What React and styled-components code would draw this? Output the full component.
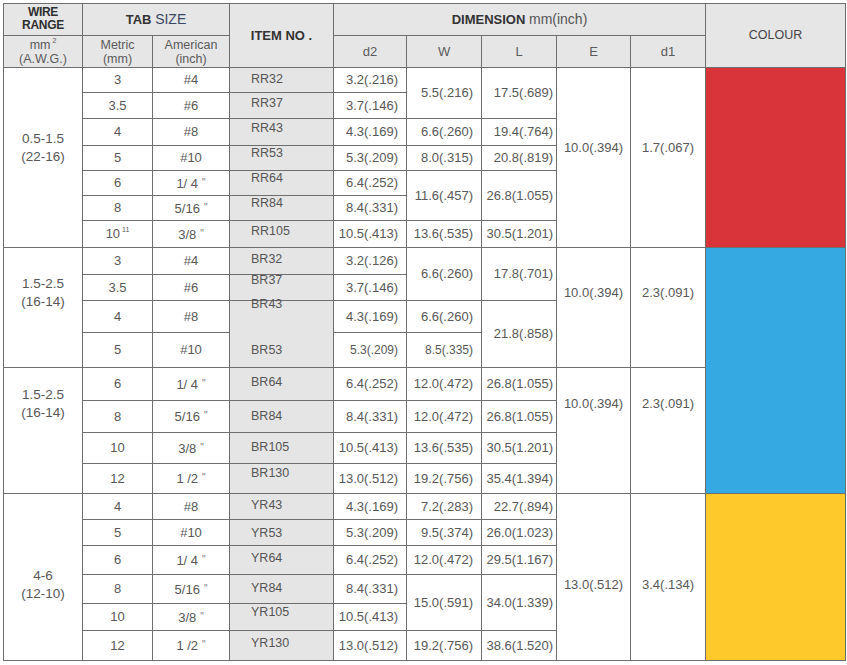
import React from 'react'
import styled, { createGlobalStyle } from 'styled-components'

const GlobalStyle = createGlobalStyle`
  html, body {
    margin: 0;
    padding: 0;
    background: #ffffff;
  }
  body {
    font-family: 'Liberation Sans', Arial, sans-serif;
  }
`

const columns = [79, 70, 77, 104, 73, 75, 75, 74, 75, 140]

// w / l: [text, rowSpan]; missing means covered by the span above
const groups = [
  {
    wire: ['0.5-1.5', '(22-16)'],
    shift: -10,
    e: '10.0(.394)',
    d1: '1.7(.067)',
    colour: '#d93439',
    colourSpan: 7,
    rows: [
      { h: 25, m: '3', a: '#4', item: 'RR32', dy: 4, d2: '3.2(.216)', w: ['5.5(.216)', 2], l: ['17.5(.689)', 2] },
      { h: 26, m: '3.5', a: '#6', item: 'RR37', dy: 3, d2: '3.7(.146)' },
      { h: 27, m: '4', a: '#8', item: 'RR43', dy: 2, d2: '4.3(.169)', w: ['6.6(.260)'], l: ['19.4(.764)'] },
      { h: 25, m: '5', a: '#10', item: 'RR53', dy: 0, d2: '5.3(.209)', w: ['8.0(.315)'], l: ['20.8(.819)'] },
      { h: 25, m: '6', a: '1/ 4', inch: true, item: 'RR64', dy: 0, d2: '6.4(.252)', w: ['11.6(.457)', 2], l: ['26.8(1.055)', 2] },
      { h: 25, m: '8', a: '5/16', inch: true, item: 'RR84', dy: 0, d2: '8.4(.331)' },
      { h: 27, m: '10', sup: '11', a: '3/8', inch: true, item: 'RR105', dy: 3, d2: '10.5(.413)', w: ['13.6(.535)'], l: ['30.5(1.201)'] },
    ],
  },
  {
    wire: ['1.5-2.5', '(16-14)'],
    shift: -15,
    e: '10.0(.394)',
    d1: '2.3(.091)',
    colour: '#35a9e1',
    colourSpan: 8,
    rows: [
      { h: 27, m: '3', a: '#4', item: 'BR32', dy: 4, d2: '3.2(.126)', w: ['6.6(.260)', 2], l: ['17.8(.701)', 2] },
      { h: 26, m: '3.5', a: '#6', item: 'BR37', dy: -2, d2: '3.7(.146)' },
      { h: 32, m: '4', a: '#8', item: 'BR43', dy: -4, d2: '4.3(.169)', w: ['6.6(.260)'], l: ['21.8(.858)', 2] },
      { h: 35, m: '5', a: '#10', item: 'BR53', dy: 10, open: true, small: true, d2: '5.3(.209)', w: ['8.5(.335)'] },
    ],
  },
  {
    wire: ['1.5-2.5', '(16-14)'],
    shift: -27,
    e: '10.0(.394)',
    d1: '2.3(.091)',
    rows: [
      { h: 33, m: '6', a: '1/ 4', inch: true, item: 'BR64', dy: 7, d2: '6.4(.252)', w: ['12.0(.472)'], l: ['26.8(1.055)'] },
      { h: 32, m: '8', a: '5/16', inch: true, item: 'BR84', dy: 8, d2: '8.4(.331)', w: ['12.0(.472)'], l: ['26.8(1.055)'] },
      { h: 31, m: '10', a: '3/8', inch: true, item: 'BR105', dy: 7, d2: '10.5(.413)', w: ['13.6(.535)'], l: ['30.5(1.201)'] },
      { h: 30, m: '12', a: '1 /2', inch: true, item: 'BR130', dy: 2, d2: '13.0(.512)', w: ['19.2(.756)'], l: ['35.4(1.394)'] },
    ],
  },
  {
    wire: ['4-6', '(12-10)'],
    shift: 8,
    e: '13.0(.512)',
    d1: '3.4(.134)',
    colour: '#fec92b',
    colourSpan: 6,
    rows: [
      { h: 26, m: '4', a: '#8', item: 'YR43', dy: 4, d2: '4.3(.169)', w: ['7.2(.283)'], l: ['22.7(.894)'] },
      { h: 26, m: '5', a: '#10', item: 'YR53', dy: 6, d2: '5.3(.209)', w: ['9.5(.374)'], l: ['26.0(1.023)'] },
      { h: 29, m: '6', a: '1/ 4', inch: true, item: 'YR64', dy: 5, d2: '6.4(.252)', w: ['12.0(.472)'], l: ['29.5(1.167)'] },
      { h: 29, m: '8', a: '5/16', inch: true, item: 'YR84', dy: 6, d2: '8.4(.331)', w: ['15.0(.591)', 2], l: ['34.0(1.339)', 2] },
      { h: 27, m: '10', a: '3/8', inch: true, item: 'YR105', dy: 1, d2: '10.5(.413)' },
      { h: 30, m: '12', a: '1 /2', inch: true, item: 'YR130', dy: 5, d2: '13.0(.512)', w: ['19.2(.756)'], l: ['38.6(1.520)'] },
    ],
  },
]

const App = () => {
  return (
    <Page>
      <GlobalStyle />
      <Sheet>
        <colgroup>
          {columns.map((width, index) => (
            <Col key={index} $w={width} />
          ))}
        </colgroup>
        <thead>
          <Row $h={32}>
            <Head>
              <Caps>
                WIRE
                <br />
                RANGE
              </Caps>
            </Head>
            <Head colSpan={2}>
              <Strong>TAB</Strong> <Light $navy>SIZE</Light>
            </Head>
            <Head rowSpan={2}>
              <Strong>ITEM NO .</Strong>
            </Head>
            <Head colSpan={5}>
              <Strong>DIMENSION</Strong> <Light>mm(inch)</Light>
            </Head>
            <Head rowSpan={2} $size={12.5}>
              COLOUR
            </Head>
          </Row>
          <Row $h={32}>
            <Head $pair>
              mm<Sup>2</Sup>
              <br />
              (A.W.G.)
            </Head>
            <Head $pair>
              Metric
              <br />
              (mm)
            </Head>
            <Head $pair>
              American
              <br />
              (inch)
            </Head>
            <Head>d2</Head>
            <Head>W</Head>
            <Head>L</Head>
            <Head>E</Head>
            <Head>d1</Head>
          </Row>
        </thead>
        <tbody>
          {groups.map((group) =>
            group.rows.map((row, index) => (
              <Row key={row.item} $h={row.h}>
                {index === 0 && (
                  <Cell rowSpan={group.rows.length} $shift={group.shift} $size={13.5}>
                    {group.wire[0]}
                    <br />
                    {group.wire[1]}
                  </Cell>
                )}
                <Cell>
                  {row.m}
                  {row.sup && <Sup>{row.sup}</Sup>}
                </Cell>
                <Cell>
                  {row.a}
                  {row.inch && <Inch>"</Inch>}
                </Cell>
                <ItemCell $open={row.open}>
                  <ItemLabel $dy={row.dy}>{row.item}</ItemLabel>
                </ItemCell>
                <Cell $align='right' $pr={8} $size={row.small ? 12 : 13}>
                  {row.d2}
                </Cell>
                {row.w && (
                  <Cell rowSpan={row.w[1] || 1} $align='right' $pr={8} $size={row.small ? 12 : 13}>
                    {row.w[0]}
                  </Cell>
                )}
                {row.l && (
                  <Cell rowSpan={row.l[1] || 1} $align='right' $pr={3}>
                    {row.l[0]}
                  </Cell>
                )}
                {index === 0 && (
                  <Cell rowSpan={group.rows.length} $shift={group.shift}>
                    {group.e}
                  </Cell>
                )}
                {index === 0 && (
                  <Cell rowSpan={group.rows.length} $shift={group.shift}>
                    {group.d1}
                  </Cell>
                )}
                {index === 0 && group.colour && (
                  <Swatch rowSpan={group.colourSpan} $bg={group.colour} />
                )}
              </Row>
            ))
          )}
        </tbody>
      </Sheet>
    </Page>
  )
}

export default App

const line = '#6e6e6e'

const Page = styled.div`
  padding: 3px 2px 0 3px;
`
const Sheet = styled.table`
  border-collapse: collapse;
  table-layout: fixed;
  width: 842px;
  font-family: 'Liberation Sans', Arial, sans-serif;
  color: #585858;
  border: 1px solid ${line};
`
const Col = styled.col`
  width: ${(p) => p.$w}px;
`
const Row = styled.tr`
  height: ${(p) => p.$h}px;
`
const Head = styled.th`
  background: #e6e6e6;
  border: 1px solid ${line};
  padding: 0;
  font-weight: normal;
  font-size: ${(p) => (p.$size ? p.$size : p.$pair ? 12.5 : 13)}px;
  line-height: ${(p) => (p.$pair ? 14 : 13)}px;
  text-align: center;
  vertical-align: middle;
  color: ${(p) => (p.$size ? '#444' : '#5a5a5a')};
  white-space: nowrap;
`
const Caps = styled.span`
  font-size: 12px;
  line-height: 13px;
  font-weight: bold;
  color: #2f2f2f;
  display: inline-block;
  padding-bottom: 1px;
  letter-spacing: -0.3px;
`
const Strong = styled.b`
  font-weight: bold;
  font-size: 13px;
  color: #333333;
`
const Light = styled.span`
  font-size: 14px;
  color: ${(p) => (p.$navy ? '#3b4662' : '#555555')};
`
const Sup = styled.sup`
  font-size: 7px;
  line-height: 0;
  margin-left: 2px;
  vertical-align: 6px;
`
const Inch = styled.span`
  font-size: 10px;
  color: #7a7a7a;
  margin-left: 4px;
  vertical-align: 2px;
`
const Cell = styled.td`
  border: 1px solid ${line};
  padding: ${(p) =>
    (p.$shift || 0) < 0 ? `0 0 ${-2 * p.$shift}px` : `${2 * (p.$shift || 0)}px 0 0`};
  padding-right: ${(p) => p.$pr || 0}px;
  text-align: ${(p) => p.$align || 'center'};
  vertical-align: middle;
  font-size: ${(p) => p.$size || 13}px;
  line-height: 18px;
  white-space: nowrap;
`
const ItemCell = styled.td`
  background: #e5e5e5;
  border: 1px solid ${line};
  border-top-style: ${(p) => (p.$open ? 'hidden' : 'solid')};
  padding: 0 0 0 21px;
  vertical-align: top;
  font-size: 12.5px;
  color: #555555;
  white-space: nowrap;
`
const ItemLabel = styled.span`
  display: block;
  line-height: 15px;
  margin-top: ${(p) => p.$dy}px;
`
const Swatch = styled.td`
  background: ${(p) => p.$bg};
  border: 1px solid ${line};
  padding: 0;
`
